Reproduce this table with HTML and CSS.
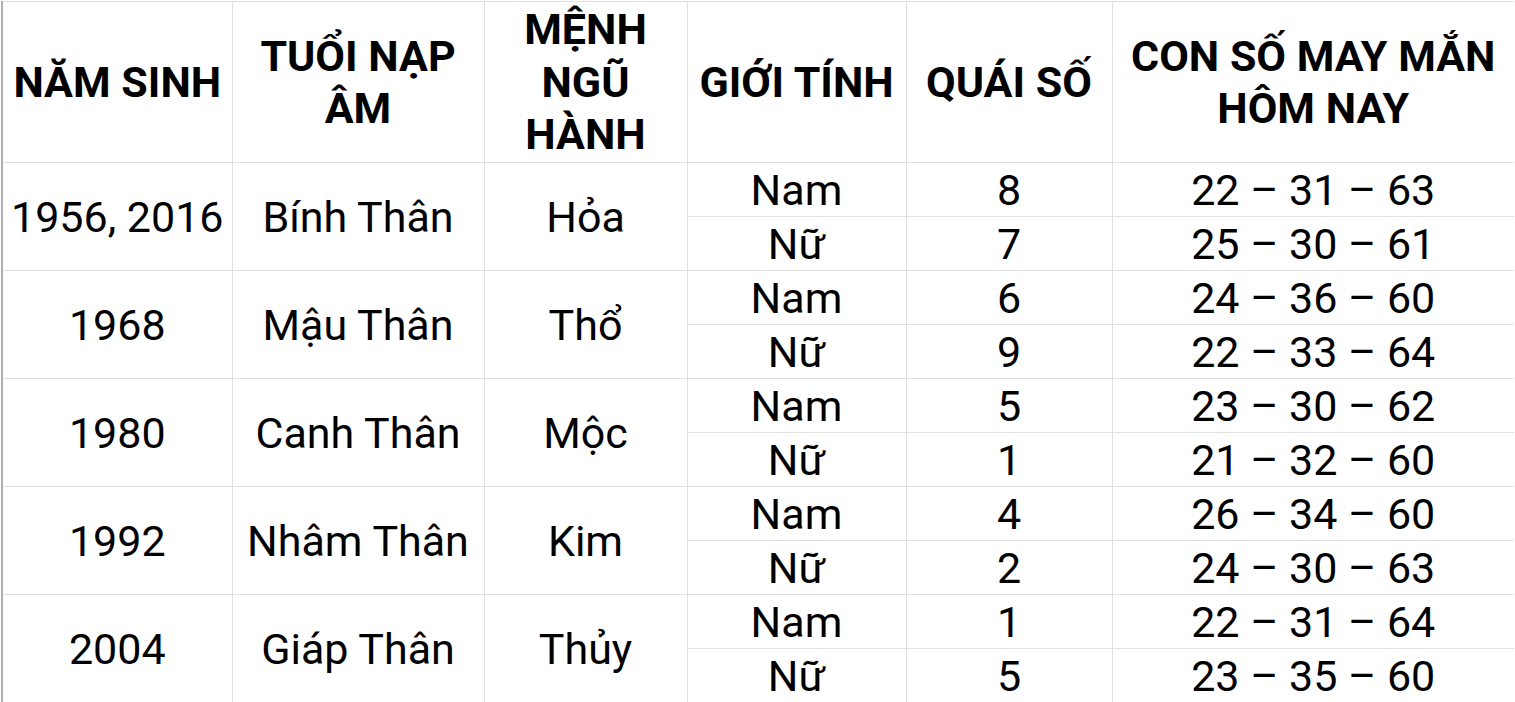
FILE: index.html
```html
<!DOCTYPE html>
<html lang="vi">
<head>
<meta charset="utf-8">
<title>Con số may mắn</title>
<link rel="stylesheet" href="styles.css">
</head>
<body>
<table class="sheet">
  <colgroup>
    <col class="c1"><col class="c2"><col class="c3"><col class="c4"><col class="c5"><col class="c6">
  </colgroup>
  <thead>
    <tr class="head">
      <th>NĂM SINH</th>
      <th>TUỔI NẠP<br>ÂM</th>
      <th>MỆNH<br>NGŨ<br>HÀNH</th>
      <th>GIỚI TÍNH</th>
      <th>QUÁI SỐ</th>
      <th>CON SỐ MAY MẮN<br>HÔM NAY</th>
    </tr>
  </thead>
  <tbody>
    <tr><td rowspan="2">1956, 2016</td><td rowspan="2">Bính Thân</td><td rowspan="2">Hỏa</td><td>Nam</td><td>8</td><td>22 – 31 – 63</td></tr>
    <tr><td>Nữ</td><td>7</td><td>25 – 30 – 61</td></tr>
    <tr><td rowspan="2">1968</td><td rowspan="2">Mậu Thân</td><td rowspan="2">Thổ</td><td>Nam</td><td>6</td><td>24 – 36 – 60</td></tr>
    <tr><td>Nữ</td><td>9</td><td>22 – 33 – 64</td></tr>
    <tr><td rowspan="2">1980</td><td rowspan="2">Canh Thân</td><td rowspan="2">Mộc</td><td>Nam</td><td>5</td><td>23 – 30 – 62</td></tr>
    <tr><td>Nữ</td><td>1</td><td>21 – 32 – 60</td></tr>
    <tr><td rowspan="2">1992</td><td rowspan="2">Nhâm Thân</td><td rowspan="2">Kim</td><td>Nam</td><td>4</td><td>26 – 34 – 60</td></tr>
    <tr><td>Nữ</td><td>2</td><td>24 – 30 – 63</td></tr>
    <tr><td rowspan="2">2004</td><td rowspan="2">Giáp Thân</td><td rowspan="2">Thủy</td><td>Nam</td><td>1</td><td>22 – 31 – 64</td></tr>
    <tr><td>Nữ</td><td>5</td><td>23 – 35 – 60</td></tr>
  </tbody>
</table>
</body>
</html>
```

FILE: styles.css
```css
html, body {
  margin: 0;
  padding: 0;
  background: #ffffff;
  overflow: hidden;
}

body {
  font-family: Roboto, "Noto Sans", Arial, sans-serif;
  color: #000000;
}

.sheet {
  border-collapse: collapse;
  table-layout: fixed;
  width: 1512px;
  margin: 1px 0 0 1px;
  border-left: 2px solid #b0b0b0;
}

.c1 { width: 230px; }
.c2 { width: 252px; }
.c3 { width: 203px; }
.c4 { width: 219px; }
.c5 { width: 206px; }
.c6 { width: 402px; }

.sheet th,
.sheet td {
  border: 1px solid #e0e0e0;
  padding: 0 2px;
  text-align: center;
  vertical-align: middle;
  white-space: nowrap;
  overflow: hidden;
}

.sheet th:first-child,
.sheet td[rowspan]:first-child {
  border-left: 2px solid #b0b0b0;
}

.sheet th:last-child,
.sheet td:last-child {
  border-right: 0;
}

.head th {
  height: 160px;
  font-size: 43px;
  font-weight: 700;
  line-height: 52.5px;
}

.sheet td {
  box-sizing: border-box;
  height: 54px;
  font-size: 43px;
  font-weight: 400;
  line-height: 51px;
  padding-top: 2px;
  padding-bottom: 0;
}
```
